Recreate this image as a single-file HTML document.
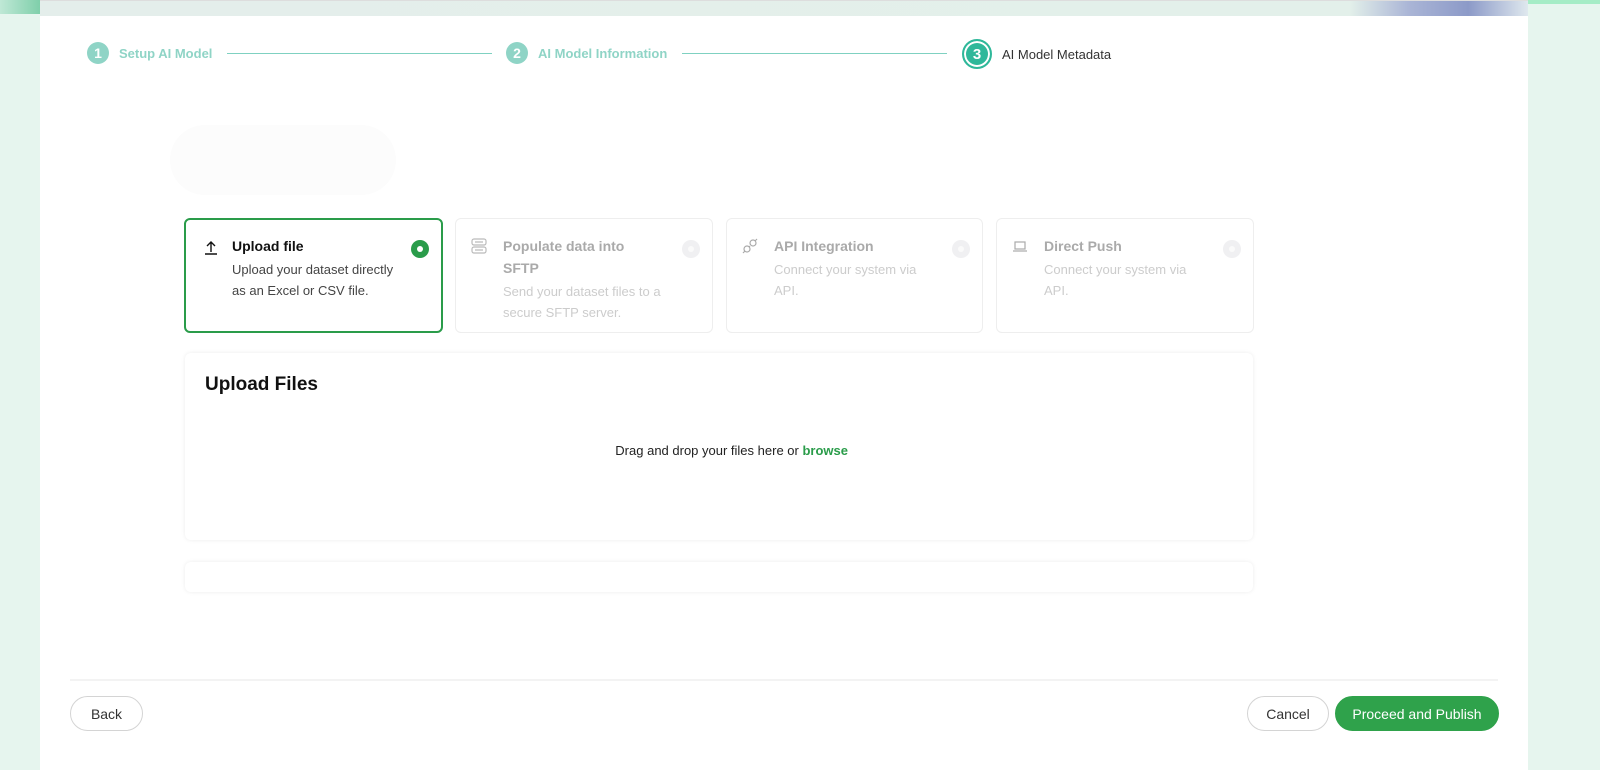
<!DOCTYPE html>
<html><head><style>
*{box-sizing:border-box;margin:0;padding:0}
body{width:1600px;height:770px;background:#e6f5ee;font-family:"Liberation Sans",sans-serif;position:relative;overflow:hidden}
.main{position:absolute;left:40px;top:0;width:1488px;height:770px;background:#fff}
.strip{position:absolute;left:40px;top:0;width:1488px;height:16px;background:linear-gradient(90deg,#e4eeeb,#e3f0ea 88%,#aab5d6 92%,#8c9ac8 96%,#dfe8ee);border-top:1px solid #ddd}
.corner{position:absolute;left:0;top:0;width:40px;height:14px;background:linear-gradient(90deg,#bfe8d6,#7fcfaa)}
.rcorner{position:absolute;left:1528px;top:0;width:72px;height:4px;background:#a5ecc6}
.step{position:absolute;top:42px;display:flex;align-items:center;font-size:13px;font-weight:bold;color:#8fd4c6}
.num{width:22px;height:22px;border-radius:50%;background:#8fd4c6;color:#fff;font-size:14px;display:flex;align-items:center;justify-content:center;margin-right:10px;font-weight:bold}
.line{position:absolute;top:53px;height:1px;background:#7fd1c1}
.card{position:absolute;top:218px;height:115px;border:1px solid #eee;border-radius:6px;background:#fff}
.card.sel{border:2px solid #2a9c4a}
.card .t{position:absolute;left:47px;top:16px;font-size:14px;font-weight:bold;color:#aaa;line-height:22px;width:168px}
.card .d{font-size:13px;font-weight:normal;color:#ccc;line-height:21px;margin-top:2px;width:165px}
.card.sel .t{color:#111;left:46px;top:15px}
.card.sel .d{color:#444}
.radio{position:absolute;right:12px;top:21px;width:18px;height:18px;border-radius:50%;background:#f0f0f2}
.radio::after{content:"";position:absolute;left:6px;top:6px;width:6px;height:6px;border-radius:50%;background:#fafafa}
.sel .radio{background:#2a9c4a;right:12px;top:20px}
.sel .radio::after{background:#fff;left:6px;top:6px}
.panel{position:absolute;left:185px;width:1068px;background:#fff;border-radius:6px;box-shadow:0 0 4px rgba(0,0,0,.08)}
.btn{position:absolute;top:696px;height:35px;border-radius:18px;border:1px solid #d4d4d4;font-size:14px;color:#333;display:flex;align-items:center;justify-content:center;background:#fff}
</style></head><body>
<div class="main"></div>
<div class="strip"></div>
<div class="corner"></div>
<div class="rcorner"></div>
<div class="step" style="left:87px"><div class="num">1</div>Setup AI Model</div>
<div class="line" style="left:227px;width:265px"></div>
<div class="step" style="left:506px"><div class="num">2</div>AI Model Information</div>
<div class="line" style="left:682px;width:265px"></div>
<div class="step" style="left:962px;top:39px;color:#333;font-weight:normal"><div class="num" style="width:30px;height:30px;background:#2fb89a;border:2px solid #2fb89a;box-shadow:inset 0 0 0 2px #fff;font-size:15px;margin-right:10px">3</div>AI Model Metadata</div>
<div style="position:absolute;left:170px;top:125px;width:226px;height:70px;border-radius:35px;background:#fcfcfc"></div>

<div class="card sel" style="left:184px;width:259px">
<svg style="position:absolute;left:17px;top:19px" width="16" height="16" viewBox="0 0 16 16"><path d="M8 13V3M4 7l4-4 4 4M2 15h12" stroke="#111" stroke-width="1.4" fill="none"/></svg>
<div class="t">Upload file<div class="d">Upload your dataset directly as an Excel or CSV file.</div></div><div class="radio"></div></div>
<div class="card" style="left:455px;width:258px">
<svg style="position:absolute;left:14px;top:18px" width="18" height="18" viewBox="0 0 18 18" fill="none" stroke="#bbb" stroke-width="1.2"><rect x="2" y="2" width="14" height="6" rx="2"/><rect x="2" y="10" width="14" height="6" rx="2"/><path d="M5 5h8M5 13h8"/></svg>
<div class="t" style="width:150px">Populate data into SFTP<div class="d">Send your dataset files to a secure SFTP server.</div></div><div class="radio"></div></div>
<div class="card" style="left:726px;width:257px">
<svg style="position:absolute;left:14px;top:18px" width="18" height="18" viewBox="0 0 18 18" fill="none" stroke="#aaa" stroke-width="1.2"><circle cx="6" cy="12" r="3"/><circle cx="12" cy="6" r="3"/><path d="M2 16l2-2M16 2l-2 2M9 9l-1 1"/></svg>
<div class="t">API Integration<div class="d" style="width:150px">Connect your system via API.</div></div><div class="radio"></div></div>
<div class="card" style="left:996px;width:258px">
<svg style="position:absolute;left:15px;top:19px" width="16" height="16" viewBox="0 0 16 16" fill="none" stroke="#aaa" stroke-width="1.2"><rect x="3" y="4" width="10" height="7"/><path d="M1 13h14"/></svg>
<div class="t">Direct Push<div class="d" style="width:150px">Connect your system via API.</div></div><div class="radio"></div></div>

<div class="panel" style="top:353px;height:187px">
<div style="position:absolute;left:20px;top:21px;font-size:19px;font-weight:bold;color:#111">Upload Files</div>
<div style="position:absolute;left:0;width:1068px;top:90px;text-align:center;font-size:13px;color:#222">&nbsp;&nbsp;&nbsp;&nbsp;&nbsp;&nbsp;&nbsp;Drag and drop your files here or <b style="color:#2a9c4a">browse</b></div>
</div>
<div class="panel" style="top:562px;height:30px"></div>
<div style="position:absolute;left:70px;top:679px;width:1428px;height:2px;background:#f3f3f3"></div>
<div class="btn" style="left:70px;width:73px">Back</div>
<div class="btn" style="left:1247px;width:82px">Cancel</div>
<div class="btn" style="left:1335px;width:164px;background:#2fa24b;border-color:#2fa24b;color:#fff">Proceed and Publish</div>
</body></html>
